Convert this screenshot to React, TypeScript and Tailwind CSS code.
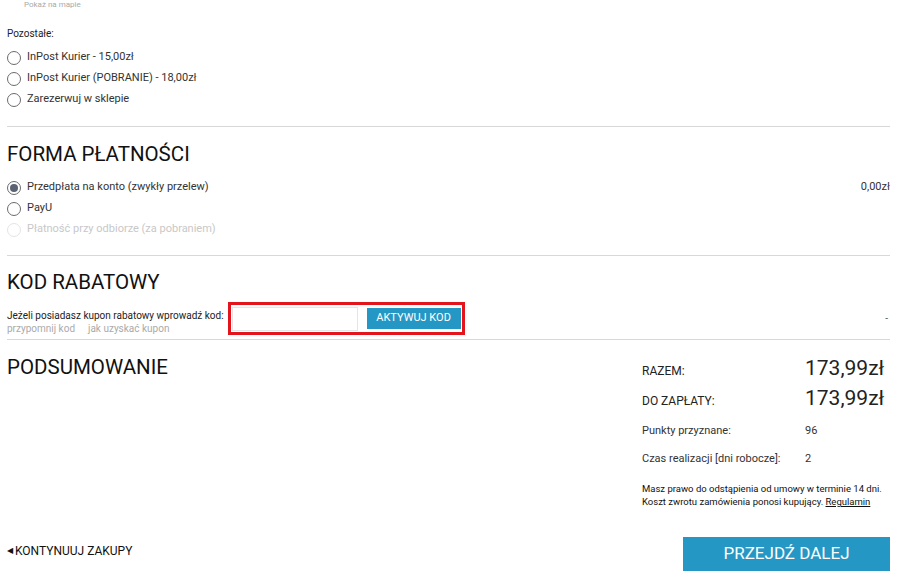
import React from 'react';

function Radio({ checked, disabled }: { checked?: boolean; disabled?: boolean }) {
  return (
    <span
      className={`inline-flex h-[14px] w-[14px] shrink-0 items-center justify-center rounded-full border ${
        disabled ? 'border-[#e4e4e4]' : 'border-[#6b6b6b]'
      } bg-white`}
    >
      {checked && <span className="h-[8px] w-[8px] rounded-full bg-[#5b6272]" />}
    </span>
  );
}

function Option({ label, checked, disabled }: { label: string; checked?: boolean; disabled?: boolean }) {
  return (
    <label className="flex h-[21px] items-center gap-[6px]">
      <Radio checked={checked} disabled={disabled} />
      <span className={disabled ? 'text-[#c8c8c8]' : 'text-[#333]'}>{label}</span>
    </label>
  );
}

export default function App() {
  const font = { fontFamily: 'Roboto, "Liberation Sans", sans-serif' };

  return (
    <div className="min-h-[578px] bg-white pl-[7px] pr-[10px] text-[#222]" style={font}>
      {/* Shipping leftovers */}
      <div className="pl-[17px] text-[8px] leading-[10px] text-[#aaa]">Pokaż na mapie</div>
      <div className="mt-[16px] text-[10px] text-[#222]">Pozostałe:</div>
      <div className="mt-[6px] text-[11px]">
        <Option label="InPost Kurier - 15,00zł" />
        <Option label="InPost Kurier (POBRANIE) - 18,00zł" />
        <Option label="Zarezerwuj w sklepie" />
      </div>

      <div className="mt-[16px] border-t border-[#d8d8d8]" />

      {/* Payment */}
      <h2 className="mt-[15px] text-[20.5px] leading-[24px] font-normal text-[#111]">FORMA PŁATNOŚCI</h2>
      <div className="mt-[11px] text-[11px]">
        <div className="flex items-center justify-between">
          <Option label="Przedpłata na konto (zwykły przelew)" checked />
          <span className="text-[#333]">0,00zł</span>
        </div>
        <Option label="PayU" />
        <Option label="Płatność przy odbiorze (za pobraniem)" disabled />
      </div>

      <div className="mt-[15px] border-t border-[#d8d8d8]" />

      {/* Coupon */}
      <h2 className="mt-[14px] text-[20.5px] leading-[24px] font-normal text-[#111]">KOD RABATOWY</h2>
      <div className="mt-[8px] flex items-start justify-between">
        <div className="flex items-start">
          <div className="pt-[7px] text-[10px] leading-[13px]">
            <div className="text-[#222]">Jeżeli posiadasz kupon rabatowy wprowadź kod:</div>
            <div className="flex gap-[13px] text-[#aaa]">
              <span>przypomnij kod</span>
              <span>jak uzyskać kupon</span>
            </div>
          </div>
          <div className="ml-[4px] flex h-[33px] w-[237px] items-center gap-[9px] border-[3px] border-[#e3141b] px-[1px]">
            <input className="h-[24px] w-[126px] border border-[#e5e5e5] outline-none" />
            <button className="h-[21px] w-[95px] bg-[#2597c4] text-[11px] text-white">AKTYWUJ KOD</button>
          </div>
        </div>
        <span className="pt-[9px] pr-[2px] text-[10px] text-[#555]">-</span>
      </div>

      <div className="mt-[4px] border-t border-[#d8d8d8]" />

      {/* Summary */}
      <div className="flex justify-between">
        <h2 className="mt-[15px] text-[20.5px] leading-[24px] font-normal text-[#111]">PODSUMOWANIE</h2>
        <div className="mr-[8px] w-[240px] pt-[15px] text-[#222]">
          <div className="grid grid-cols-[163px_1fr] items-center">
            <span className="pt-[6px] text-[12px]">RAZEM:</span>
            <span className="text-[21px] leading-[26px]">173,99zł</span>
            <span className="mt-[4px] pt-[6px] text-[12px]">DO ZAPŁATY:</span>
            <span className="mt-[4px] text-[21px] leading-[26px]">173,99zł</span>
            <span className="mt-[12px] text-[11px] text-[#333]">Punkty przyznane:</span>
            <span className="mt-[12px] text-[11px] text-[#333]">96</span>
            <span className="mt-[11px] text-[11px] text-[#333]">Czas realizacji [dni robocze]:</span>
            <span className="mt-[11px] text-[11px] text-[#333]">2</span>
          </div>
          <p className="mt-[15px] text-[9.5px] leading-[13px] text-[#111]">
            Masz prawo do odstąpienia od umowy w terminie 14 dni.
            <br />
            Koszt zwrotu zamówienia ponosi kupujący. <a className="underline">Regulamin</a>
          </p>
        </div>
      </div>

      {/* Footer actions */}
      <div className="mt-[29px] flex items-start justify-between">
        <a className="mt-[5px] flex items-center gap-[2px] text-[12px] text-[#111]">
          <span className="text-[8px]">◀</span>
          KONTYNUUJ ZAKUPY
        </a>
        <button className="h-[34px] w-[207px] bg-[#2597c4] text-[17px] text-white">PRZEJDŹ DALEJ</button>
      </div>
    </div>
  );
}
